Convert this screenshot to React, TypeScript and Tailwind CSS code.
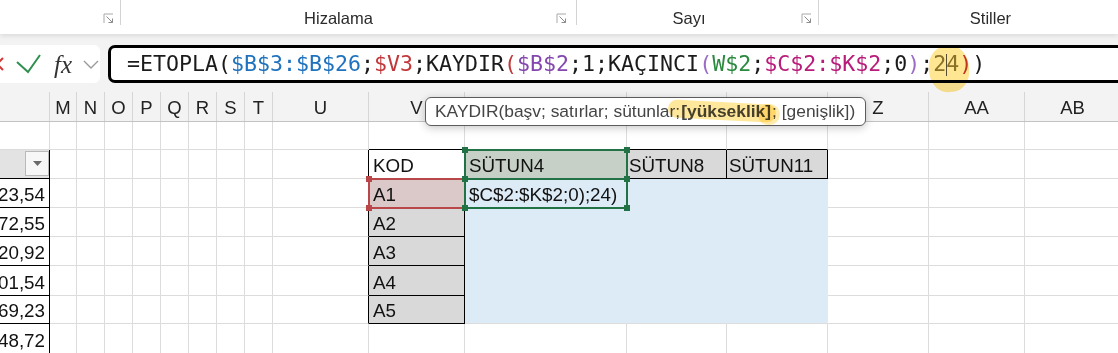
import type { ReactNode } from "react";

const GRID =
  "grid grid-cols-[50px_27px_28px_28px_28px_28px_28px_28px_28px_96px_96px_162px_100px_101px_101px_96px_96px]";

const HEADERS = ["", "M", "N", "O", "P", "Q", "R", "S", "T", "U", "V", "W", "X", "Y", "Z", "AA", "AB"];
const ROW_H = ["h-[28px]", "h-[29px]", "h-[29px]", "h-[29px]", "h-[29px]", "h-[30px]", "h-[28px]", "h-[30px]"];
const L_VALUES = ["", "", "123,54", "172,55", "220,92", "301,54", "169,23", "148,72"];

const COL_V = 10;
const COL_W = 11;
const COL_X = 12;
const COL_Y = 13;

const FORMULA: [string, string][] = [
  ["=ETOPLA(", "text-[#1b1b1b]"],
  ["$B$3:$B$26", "text-[#1f72bd]"],
  [";", "text-[#1b1b1b]"],
  ["$V3", "text-[#c2383a]"],
  [";KAYDIR", "text-[#1b1b1b]"],
  ["(", "text-[#c2383a]"],
  ["$B$2", "text-[#8447b0]"],
  [";1;KAÇINCI", "text-[#1b1b1b]"],
  ["(", "text-[#9a6cc8]"],
  ["W$2", "text-[#2a8a3e]"],
  [";", "text-[#1b1b1b]"],
  ["$C$2:$K$2", "text-[#b81c7a]"],
  [";0", "text-[#1b1b1b]"],
  [")", "text-[#9a6cc8]"],
  [";", "text-[#1b1b1b]"],
];

function Launcher() {
  return (
    <svg width="11" height="11" viewBox="0 0 11 11" className="shrink-0">
      <path d="M1 10V1h9" fill="none" stroke="#a8a8a8" strokeWidth="1" />
      <path d="M3.5 3.5 9.5 9.5M9.5 5.5v4h-4" fill="none" stroke="#8c8c8c" strokeWidth="1" />
    </svg>
  );
}

function Ribbon() {
  return (
    <div className="relative z-10 flex h-[34px] bg-white text-[16.5px] text-[#2b2b2b] shadow-[0_2px_5px_rgba(0,0,0,0.10)]">
      <div className="flex w-[120px] shrink-0 justify-end pr-[6px] pt-[13px]">
        <Launcher />
      </div>
      <div className="h-[25px] w-px bg-[#d4d4d4]" />
      <div className="flex w-[455px] shrink-0 pr-[9px]">
        <span className="flex-1 pt-[8px] text-center leading-[20px]">Hizalama</span>
        <div className="pt-[13px]">
          <Launcher />
        </div>
      </div>
      <div className="h-[25px] w-px bg-[#d4d4d4]" />
      <div className="flex w-[241px] shrink-0 pr-[6px]">
        <span className="flex-1 pt-[8px] text-center leading-[20px]">Sayı</span>
        <div className="pt-[13px]">
          <Launcher />
        </div>
      </div>
      <div className="h-[25px] w-px bg-[#d4d4d4]" />
      <div className="flex flex-1 pl-[44px]">
        <span className="flex-1 pt-[8px] text-center leading-[20px]">Stiller</span>
      </div>
    </div>
  );
}

function FormulaBar() {
  return (
    <div className="flex h-[58px] items-start gap-[8px] pt-[11px]">
      <div className="-ml-[10px] flex h-[38px] w-[110px] shrink-0 items-center rounded-[6px] bg-white">
        <svg width="14" height="14" viewBox="0 0 14 14" className="shrink-0">
          <path d="M1 1 13 13M13 1 1 13" stroke="#d1383a" strokeWidth="2" />
        </svg>
        <svg width="26" height="20" viewBox="0 0 26 20" className="ml-[12px] shrink-0">
          <polyline points="1,8 12,18 24,1" fill="none" stroke="#2f8f4e" strokeWidth="2" />
        </svg>
        <span className="ml-[12px] w-[28px] shrink-0 font-['Liberation_Serif',serif] text-[25px] italic leading-none text-[#333]">
          fx
        </span>
        <svg width="16" height="9" viewBox="0 0 16 9" className="ml-[1px] shrink-0">
          <polyline points="1,1 8,8 15,1" fill="none" stroke="#9a9a9a" strokeWidth="1.4" />
        </svg>
      </div>
      <div className="-mr-[14px] flex h-[38px] flex-1 items-center overflow-hidden rounded-[7px] border-[3px] border-black bg-white pl-[16px]">
        <span className="whitespace-pre font-['DejaVu_Sans_Mono',monospace] text-[21.6px] leading-none">
          {FORMULA.map(([t, c], i) => (
            <span key={i} className={c}>
              {t}
            </span>
          ))}
          <span className="text-[#8a7d45]">2</span>
          <span className="-mr-px inline-block h-[22px] w-0 border-l border-[#555] align-middle" />
          <span className="text-[#8a7d45]">4</span>
          <span className="text-[#c2383a]">)</span>
          <span className="text-[#1b1b1b]">)</span>
        </span>
      </div>
    </div>
  );
}

function HeaderRow() {
  return (
    <div className={`${GRID} h-[30px] border-b border-[#c2c2c2]`}>
      {HEADERS.map((h, i) => (
        <div
          key={i}
          className="flex items-center justify-center overflow-hidden border-r border-[#d6d6d6] pt-[2px] text-[18.5px] text-[#222]"
        >
          {h}
        </div>
      ))}
    </div>
  );
}

function Corners({ color }: { color: string }) {
  const sq = `absolute h-[6px] w-[6px] ${color}`;
  return (
    <>
      <span className={`${sq} -left-[4px] -top-[4px]`} />
      <span className={`${sq} -right-[4px] -top-[4px]`} />
      <span className={`${sq} -bottom-[4px] -left-[4px]`} />
      <span className={`${sq} -bottom-[4px] -right-[4px]`} />
    </>
  );
}

function cellLook(r: number, c: number) {
  const black = { r: false, b: false };
  let bg = "bg-white";
  let tone = "grid";
  // L column: table with black rules
  if (c === 0) {
    black.r = r >= 1;
    black.b = r >= 1 && r <= 6;
    if (r === 1) bg = "bg-[#e3e3e3]";
  }
  if (c === 9) black.r = r >= 1 && r <= 6;
  if (c === COL_V) {
    black.b = r <= 6;
    black.r = r >= 1 && r <= 6;
    if (r === 2) bg = "bg-[#dbc9c9]";
    if (r >= 3 && r <= 6) bg = "bg-[#d9d9d9]";
  }
  if (c >= COL_W && c <= COL_Y) {
    if (r === 0) black.b = true;
    if (r === 1) {
      black.b = true;
      black.r = true;
      bg = c === COL_W ? "bg-[#c6d0c6]" : "bg-[#d9d9d9]";
    }
    if (r >= 2 && r <= 6) {
      bg = "bg-[#ddebf7]";
      tone = r === 6 ? "blueEnd" : "blue";
    }
  }
  const rCls = black.r
    ? "border-r-black"
    : tone === "grid"
      ? "border-r-[#dcdcdc]"
      : "border-r-[#ddebf7]";
  const bCls = black.b
    ? "border-b-black"
    : tone === "blue"
      ? "border-b-[#ddebf7]"
      : "border-b-[#dcdcdc]";
  return `${bg} ${rCls} ${bCls}`;
}

function cellContent(r: number, c: number): ReactNode {
  if (c === 0) {
    if (r === 1)
      return (
        <div className="flex h-[25px] w-[24px] items-center justify-center self-center border border-[#b9b9b9] bg-[#f7f7f7]">
          <svg width="9" height="5" viewBox="0 0 9 5">
            <polygon points="0,0 9,0 4.5,5" fill="#6a6a6a" />
          </svg>
        </div>
      );
    return L_VALUES[r] ? <span className="whitespace-nowrap pr-[4px]">{L_VALUES[r]}</span> : null;
  }
  if (c === COL_V) {
    if (r === 1) return <span className="pl-[4px]">KOD</span>;
    if (r >= 2 && r <= 6) return <span className="pl-[4px]">{`A${r - 1}`}</span>;
  }
  if (c === COL_W && r === 1) return <span className="pl-[4px]">SÜTUN4</span>;
  if (c === COL_W && r === 2) return <span className="whitespace-nowrap pl-[4px]">$C$2:$K$2;0);24)</span>;
  if (c === COL_X && r === 1) return <span className="pl-[2px]">SÜTUN8</span>;
  if (c === COL_Y && r === 1) return <span className="pl-[2px]">SÜTUN11</span>;
  return null;
}

function Body() {
  return (
    <div className="font-['Liberation_Sans',Arial,sans-serif] text-[18.8px] leading-[22px] text-[#111]">
      {ROW_H.map((h, r) => (
        <div key={r} className={`${GRID} ${h}`}>
          {HEADERS.map((_, c) => (
            <div
              key={c}
              className={`relative flex items-end border-r border-b pb-[1px] ${c === 0 ? "justify-end" : ""} ${cellLook(r, c)}`}
            >
              {cellContent(r, c)}
              {c === COL_V && r === 2 && (
                <div className="pointer-events-none absolute -left-[1px] -top-[1px] z-10 h-[31px] w-[98px] border-2 border-[#b9474a]">
                  <Corners color="bg-[#b9474a]" />
                </div>
              )}
              {c === COL_W && (r === 1 || r === 2) && (
                <div className="pointer-events-none absolute -left-[1px] -top-[1px] z-10 h-[31px] w-[164px] border-2 border-[#217346]">
                  <Corners color="bg-[#217346]" />
                </div>
              )}
            </div>
          ))}
        </div>
      ))}
    </div>
  );
}

export default function App() {
  return (
    <div className="relative h-[353px] w-[1118px] overflow-hidden bg-[#f3f3f3] font-['Liberation_Sans',Arial,sans-serif]">
      <Ribbon />
      <FormulaBar />
      <HeaderRow />
      <Body />

      {/* highlighter stroke on the "24" argument */}
      <div className="pointer-events-none absolute left-[929px] top-[46px] z-20 h-[46px] w-[40px] rotate-[-6deg] rounded-[45%] bg-[#ffd54a]/60 mix-blend-multiply" />

      {/* function argument tooltip */}
      <div className="absolute left-[425px] top-[97px] z-20 flex h-[29px] w-[441px] items-center rounded-[6px] border-[1.5px] border-[#5c5c5c] bg-white pl-[9px] text-[17.4px] whitespace-nowrap text-[#454545] shadow-[0_2px_8px_rgba(0,0,0,0.22)]">
        KAYDIR(başv; satırlar; sütunlar; <b className="px-[1px] font-bold">[yükseklik]</b>; [genişlik])
      </div>
      <div className="pointer-events-none absolute left-[668px] top-[102px] z-30 h-[18px] w-[108px] rotate-[3deg] rounded-full bg-[#ffd54a]/55 mix-blend-multiply" />
      <div className="pointer-events-none absolute left-[758px] top-[104px] z-30 h-[21px] w-[22px] rounded-full bg-[#ffd54a]/45 mix-blend-multiply" />
    </div>
  );
}
